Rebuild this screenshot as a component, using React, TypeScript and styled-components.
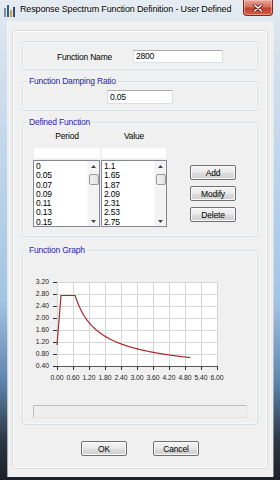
import * as React from 'react';
import styled, { createGlobalStyle } from 'styled-components';

const GlobalStyle = createGlobalStyle`
  html, body {
    margin: 0;
    padding: 0;
  }
  body {
    width: 280px;
    height: 480px;
    overflow: hidden;
    font-family: "Liberation Sans", Arial, sans-serif;
  }
`;

const Frame = styled.div`
  width: 280px;
  height: 480px;
  box-sizing: border-box;
  display: flex;
  flex-direction: column;
  background: linear-gradient(
    180deg,
    #e6ecf2 0px,
    #d8e3ee 40px,
    #c2d7ea 150px,
    #a4c4e3 300px,
    #6186ad 380px,
    #2c3845 440px,
    #1b2028 480px
  );
`;

const TitleBar = styled.div`
  height: 21px;
  flex: none;
  display: flex;
  align-items: flex-start;
  padding: 0 7px 0 4px;
`;

const AppIcon = styled.svg`
  margin-top: 5px;
  flex: none;
`;

const TitleText = styled.div`
  margin: 4px 0 0 4px;
  font-size: 9px;
  letter-spacing: -0.15px;
  color: #000;
  white-space: nowrap;
  flex: 1;
  text-shadow: 0 0 3px #fff;
`;

const CloseButton = styled.div`
  width: 30px;
  height: 16px;
  box-sizing: border-box;
  border: 1px solid #7b2a22;
  border-top: none;
  border-radius: 0 0 4px 4px;
  background: linear-gradient(180deg, #e7a597 0%, #d6705f 45%, #c2412f 55%, #d15f47 100%);
  box-shadow: inset 0 0 0 1px rgba(255, 210, 200, 0.5);
  display: flex;
  align-items: center;
  justify-content: center;
`;

const Body = styled.div`
  flex: 1;
  display: flex;
  padding: 0 7px 3px 8px;
  min-height: 0;
`;

const Client = styled.div`
  flex: 1;
  display: flex;
  background: #f0f0f0;
  padding: 9px 5px 8px 4px;
  box-shadow: -1px 0 0 rgba(255, 255, 255, 0.6), 1px 0 0 rgba(255, 255, 255, 0.4);
`;

const Panel = styled.div`
  flex: 1;
  box-sizing: border-box;
  border: 1px solid #d9dcdf;
  border-radius: 3px;
  box-shadow: inset 0 0 0 1px #fbfbfb;
  padding: 10px 9px 0 9px;
  display: flex;
  flex-direction: column;
`;

const Group = styled.div<{ $h: number; $gap?: number }>`
  position: relative;
  box-sizing: border-box;
  height: ${(p) => p.$h}px;
  margin-top: ${(p) => p.$gap ?? 0}px;
  border: 1px solid #d5dfe5;
  border-radius: 3px;
  box-shadow: inset 0 0 0 1px #f8f8f8;
  flex: none;
`;

const Legend = styled.span`
  position: absolute;
  top: -6px;
  left: 4px;
  padding: 0 2px;
  background: #f0f0f0;
  color: #2a24b0;
  font-size: 8.5px;
  letter-spacing: -0.2px;
  line-height: 10px;
`;

const Label = styled.span`
  font-size: 8.5px;
  letter-spacing: -0.2px;
  color: #000;
`;

const NameRow = styled.div`
  display: grid;
  grid-template-columns: 76px 90px;
  align-items: center;
  padding: 8px 0 0 34px;
`;

const TextBox = styled.div<{ $w: number; $h: number }>`
  width: ${(p) => p.$w}px;
  height: ${(p) => p.$h}px;
  box-sizing: border-box;
  background: #fff;
  border: 1px solid #dbdfe6;
  border-top-color: #abadb3;
  font-size: 8.5px;
  letter-spacing: -0.2px;
  line-height: ${(p) => p.$h - 2}px;
  padding-left: 2px;
  color: #000;
`;

const CenterRow = styled.div`
  display: flex;
  justify-content: center;
  padding-top: 8px;
`;

const DefinedBody = styled.div`
  display: flex;
  align-items: flex-start;
  padding: 8px 0 0 10px;
`;

const Table = styled.div`
  display: grid;
  grid-template-columns: 68px 66px;
`;

const Column = styled.div`
  display: flex;
  flex-direction: column;
`;

const Header = styled.div`
  height: 10px;
  line-height: 10px;
  text-align: center;
  font-size: 8.5px;
  letter-spacing: -0.2px;
  margin-bottom: 6px;
`;

const EntryBox = styled.div<{ $w: number }>`
  width: ${(p) => p.$w}px;
  height: 12px;
  box-sizing: border-box;
  background: #fff;
  border: 1px solid #eef0f3;
  margin-bottom: 1px;
`;

const ListBox = styled.div<{ $w: number }>`
  width: ${(p) => p.$w}px;
  height: 67px;
  box-sizing: border-box;
  border: 1px solid #828790;
  background: #fff;
  display: flex;
  overflow: hidden;
`;

const Items = styled.div`
  flex: 1;
  padding: 1px 0 0 2px;
`;

const Item = styled.div`
  height: 9.3px;
  line-height: 9.3px;
  font-size: 8.5px;
  letter-spacing: -0.2px;
  color: #000;
`;

const ScrollBar = styled.div`
  width: 11px;
  flex: none;
  background: #f3f3f3;
  border-left: 1px solid #f8f8f8;
  display: flex;
  flex-direction: column;
  align-items: center;
`;

const Arrow = styled.svg`
  flex: none;
  margin: 4px 0 3px;
`;

const Thumb = styled.div`
  width: 10px;
  height: 11px;
  box-sizing: border-box;
  border: 1px solid #9a9a9a;
  border-radius: 2px;
  background: linear-gradient(90deg, #f2f2f2, #e2e2e2);
  margin-top: 3px;
`;

const Track = styled.div`
  flex: 1;
`;

const ButtonColumn = styled.div`
  display: flex;
  flex-direction: column;
  gap: 6px;
  margin: 34px 0 0 23px;
`;

const Button = styled.button`
  width: 46px;
  height: 15px;
  padding: 0;
  box-sizing: border-box;
  border: 1px solid #707070;
  border-radius: 2px;
  background: linear-gradient(180deg, #f3f3f3 0%, #ebebeb 48%, #dedede 52%, #cfcfcf 100%);
  box-shadow: inset 0 0 0 1px #fafafa;
  font-family: "Liberation Sans", Arial, sans-serif;
  font-size: 8.5px;
  letter-spacing: -0.2px;
  color: #000;
  line-height: 12px;
`;

const GraphBody = styled.div`
  display: flex;
  flex-direction: column;
  padding-top: 23px;
`;

const Progress = styled.div`
  width: 214px;
  height: 13px;
  box-sizing: border-box;
  margin: 21px 0 0 10px;
  border: 1px solid #bcbcbc;
  border-bottom-color: #e3e3e3;
  border-right-color: #e3e3e3;
  background: #eeeeee;
`;

const Footer = styled.div`
  display: flex;
  justify-content: center;
  gap: 26px;
  margin-top: 16px;
`;

const periods = ['0', '0.05', '0.07', '0.09', '0.11', '0.13', '0.15'];
const values = ['1.1', '1.65', '1.87', '2.09', '2.31', '2.53', '2.75'];

const ListScroll: React.FC = () => (
  <ScrollBar>
    <Arrow width="5" height="3" viewBox="0 0 5 3">
      <path d="M0 3 L2.5 0 L5 3 Z" fill="#444" />
    </Arrow>
    <Thumb />
    <Track />
    <Arrow width="5" height="3" viewBox="0 0 5 3">
      <path d="M0 0 L2.5 3 L5 0 Z" fill="#444" />
    </Arrow>
  </ScrollBar>
);

// plot area: 160 x 84 px, T 0..6, Sa 0.4..3.2
const px = (t: number) => 34 + t * (160 / 6);
const py = (v: number) => 92 - (v - 0.4) * 30;

const spectrum = (t: number) => {
  if (t <= 0.15) return 1.1 + 11 * t;
  if (t <= 0.68) return 2.75;
  return 2.1 * Math.pow(t, -0.7);
};

const Graph: React.FC = () => {
  const xs = Array.from({ length: 11 }, (_, i) => i * 0.6);
  const ys = Array.from({ length: 8 }, (_, i) => 0.4 + i * 0.4);
  const pts = [
    `${px(0)},${py(1.1)}`,
    `${px(0.15)},${py(2.75)}`,
    `${px(0.68)},${py(2.75)}`,
  ];
  for (let t = 0.7; t <= 5.0001; t += 0.02) {
    pts.push(`${px(t).toFixed(2)},${py(spectrum(t)).toFixed(2)}`);
  }
  return (
    <svg width="234" height="110" viewBox="0 0 234 110" style={{ display: 'block' }}>
      <rect x="34" y="8" width="160" height="84" fill="#fff" />
      {xs.map((t) => (
        <line key={'vx' + t} x1={Math.round(px(t)) + 0.5} x2={Math.round(px(t)) + 0.5} y1="8" y2="92" stroke="#d6d6d6" strokeWidth="1" />
      ))}
      {ys.map((v) => (
        <line key={'hy' + v} x1="34" x2="194" y1={Math.round(py(v)) + 0.5} y2={Math.round(py(v)) + 0.5} stroke="#d6d6d6" strokeWidth="1" />
      ))}
      <line x1="34" x2="194" y1="92.5" y2="92.5" stroke="#555" strokeWidth="1" />
      {ys.map((v) => (
        <line key={'ty' + v} x1="30" x2="34" y1={Math.round(py(v)) + 0.5} y2={Math.round(py(v)) + 0.5} stroke="#333" strokeWidth="1" />
      ))}
      {xs.map((t) => (
        <line key={'tx' + t} x1={Math.round(px(t)) + 0.5} x2={Math.round(px(t)) + 0.5} y1="92" y2="96" stroke="#333" strokeWidth="1" />
      ))}
      {ys.map((v) => (
        <text
          key={'ly' + v}
          x="26"
          y={py(v) + 2.4}
          textAnchor="end"
          fontSize="6.8"
          fontFamily="Liberation Sans, Arial, sans-serif"
          fill="#222"
        >
          {v.toFixed(2)}
        </text>
      ))}
      {xs.map((t) => (
        <text
          key={'lx' + t}
          x={px(t)}
          y="106"
          textAnchor="middle"
          fontSize="6.8"
          fontFamily="Liberation Sans, Arial, sans-serif"
          fill="#222"
        >
          {t.toFixed(2)}
        </text>
      ))}
      <polyline points={pts.join(' ')} fill="none" stroke="#a8282c" strokeWidth="1.2" />
    </svg>
  );
};

const App: React.FC = () => {
  return (
    <>
      <GlobalStyle />
      <Frame>
        <TitleBar>
          <AppIcon width="12" height="12" viewBox="0 0 12 12">
            <rect x="0" y="3" width="2" height="9" fill="#7a8ea8" />
            <rect x="3" y="0" width="2" height="12" fill="#3a5a8a" />
            <rect x="6" y="5" width="2" height="7" fill="#c9a43a" />
            <rect x="9" y="2" width="2" height="10" fill="#2c4a78" />
          </AppIcon>
          <TitleText>Response Spectrum Function Definition - User Defined</TitleText>
          <CloseButton>
            <svg width="10" height="8" viewBox="0 0 10 8">
              <path d="M1.5 1 L8.5 7 M8.5 1 L1.5 7" stroke="#5a1a14" strokeWidth="3" strokeLinecap="round" />
              <path d="M1.5 1 L8.5 7 M8.5 1 L1.5 7" stroke="#fff" strokeWidth="1.6" strokeLinecap="round" />
            </svg>
          </CloseButton>
        </TitleBar>
        <Body>
          <Client>
            <Panel>
              <Group $h={29}>
                <NameRow>
                  <Label>Function Name</Label>
                  <TextBox $w={90} $h={13}>2800</TextBox>
                </NameRow>
              </Group>

              <Group $h={30} $gap={11}>
                <Legend>Function Damping Ratio</Legend>
                <CenterRow>
                  <TextBox $w={66} $h={14}>0.05</TextBox>
                </CenterRow>
              </Group>

              <Group $h={115} $gap={11}>
                <Legend>Defined Function</Legend>
                <DefinedBody>
                  <Table>
                    <Column>
                      <Header>Period</Header>
                      <EntryBox $w={68} />
                      <ListBox $w={67}>
                        <Items>
                          {periods.map((p) => (
                            <Item key={p}>{p}</Item>
                          ))}
                        </Items>
                        <ListScroll />
                      </ListBox>
                    </Column>
                    <Column>
                      <Header>Value</Header>
                      <EntryBox $w={66} />
                      <ListBox $w={66}>
                        <Items>
                          {values.map((v) => (
                            <Item key={v}>{v}</Item>
                          ))}
                        </Items>
                        <ListScroll />
                      </ListBox>
                    </Column>
                  </Table>
                  <ButtonColumn>
                    <Button>Add</Button>
                    <Button>Modify</Button>
                    <Button>Delete</Button>
                  </ButtonColumn>
                </DefinedBody>
              </Group>

              <Group $h={175} $gap={13}>
                <Legend>Function Graph</Legend>
                <GraphBody>
                  <Graph />
                  <Progress />
                </GraphBody>
              </Group>

              <Footer>
                <Button>OK</Button>
                <Button>Cancel</Button>
              </Footer>
            </Panel>
          </Client>
        </Body>
      </Frame>
    </>
  );
};

export default App;
